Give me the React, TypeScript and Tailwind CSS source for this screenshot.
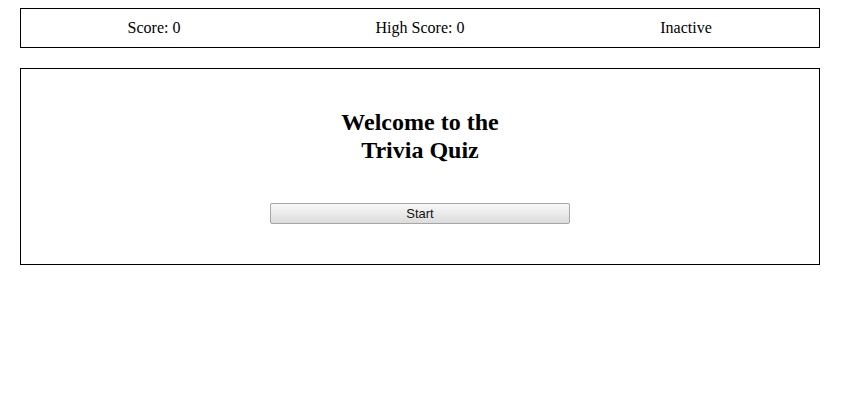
export default function App() {
  return (
    <div className="bg-white w-[843px] h-[413px] pt-2 px-[20px] font-['Liberation_Serif',serif] text-black">
      <div className="w-[800px] h-[40px] border border-black flex items-center text-[16px]">
        <div className="flex-1 text-center">Score: 0</div>
        <div className="flex-1 text-center">High Score: 0</div>
        <div className="flex-1 text-center">Inactive</div>
      </div>
      <div className="w-[800px] mt-[20px] border border-black pt-[39px] pb-[40px] flex flex-col items-center">
        <h2 className="w-[200px] text-center text-[24px] leading-[28px] font-bold">
          Welcome to the Trivia Quiz
        </h2>
        <button className="mt-[39px] w-[300px] h-[21px] border border-[#a6a6a6] rounded-[2px] bg-gradient-to-b from-[#f8f8f8] to-[#dcdcdc] text-[13px] font-['Liberation_Sans',sans-serif] text-[#111] leading-none">
          Start
        </button>
      </div>
    </div>
  );
}
